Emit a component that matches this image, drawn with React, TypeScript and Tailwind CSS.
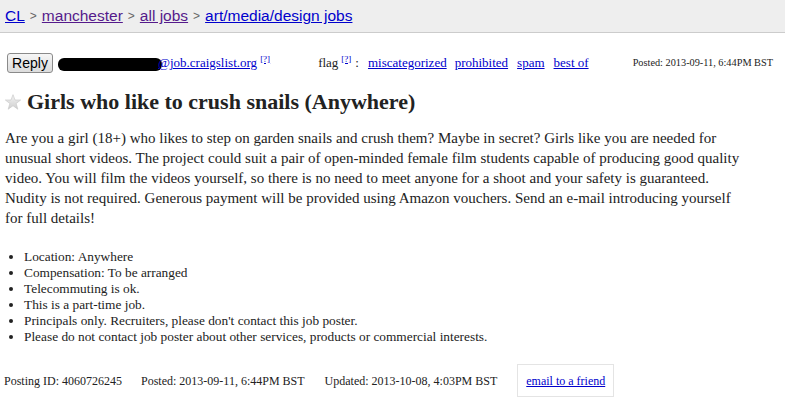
import React from "react";

const serif = { fontFamily: '"Liberation Serif", "Times New Roman", serif' };
const sans = { fontFamily: '"Liberation Sans", Arial, sans-serif' };

function Help() {
    return <sup className="text-[9px] ml-[3px] text-[#00c] underline align-[6px]">[?]</sup>;
}

function Star() {
    return (
        <svg width="16" height="16" viewBox="0 0 24 24" className="shrink-0">
            <defs>
                <linearGradient id="sg" x1="0" y1="0" x2="0" y2="1">
                    <stop offset="0" stopColor="#f4f4f4" />
                    <stop offset="1" stopColor="#cfcfcf" />
                </linearGradient>
            </defs>
            <polygon
                points="12,1 15,9 23.5,9 16.7,14.2 19.2,22.8 12,17.6 4.8,22.8 7.3,14.2 0.5,9 9,9"
                fill="url(#sg)"
                stroke="#c8c8c8"
                strokeWidth="1"
            />
        </svg>
    );
}

export default function App() {
    const details = [
        "Location: Anywhere",
        "Compensation: To be arranged",
        "Telecommuting is ok.",
        "This is a part-time job.",
        "Principals only. Recruiters, please don't contact this job poster.",
        "Please do not contact job poster about other services, products or commercial interests.",
    ];

    return (
        <div className="w-[785px] h-[416px] bg-white overflow-hidden text-[#222]" style={serif}>
            {/* breadcrumbs */}
            <div className="h-[33px] bg-[#eeeeee] border-b border-[#cccccc] flex items-center px-[5px] text-[15.5px]" style={sans}>
                <a className="text-[#0000cc] underline">CL</a>
                <span className="text-[#666] text-[12px] mx-[5px]">&gt;</span>
                <a className="text-[#551a8b] underline">manchester</a>
                <span className="text-[#666] text-[12px] mx-[5px]">&gt;</span>
                <a className="text-[#551a8b] underline">all jobs</a>
                <span className="text-[#666] text-[12px] mx-[5px]">&gt;</span>
                <a className="text-[#0000cc] underline">art/media/design jobs</a>
            </div>

            {/* reply / flag row */}
            <div className="flex items-center h-[20px] mt-[20px] pl-[7px] text-[13px]">
                <button
                    className="h-[20px] w-[46px] border border-[#8a8a8a] rounded-[3px] bg-gradient-to-b from-[#f6f6f6] to-[#dcdcdc] text-[14px] text-black leading-none"
                    style={sans}
                >
                    Reply
                </button>
                <div className="ml-[5px] w-[104px] h-[13px] bg-black rounded-[6px] mt-[3px]" />
                <a className="text-[#0000cc] underline -ml-[4px]">@job.craigslist.org</a>
                <Help />
                <span className="ml-[48px]">flag</span>
                <Help />
                <span className="ml-[4px]">:</span>
                <a className="ml-[9px] text-[#0000cc] underline">miscategorized</a>
                <a className="ml-[8px] text-[#0000cc] underline">prohibited</a>
                <a className="ml-[9px] text-[#0000cc] underline">spam</a>
                <a className="ml-[9px] text-[#0000cc] underline">best of</a>
                <span className="ml-auto mr-[12px] text-[10.3px]">Posted: 2013-09-11, 6:44PM BST</span>
            </div>

            {/* title */}
            <div className="flex items-center mt-[15px] pl-[5px] gap-[6px]">
                <Star />
                <h2 className="text-[22px] font-bold leading-[28px] text-[#222]">
                    Girls who like to crush snails (Anywhere)
                </h2>
            </div>

            {/* body */}
            <p className="px-[5px] mt-[12px] text-[15px] leading-[20px] text-[#222] whitespace-nowrap">
                Are you a girl (18+) who likes to step on garden snails and crush them? Maybe in secret? Girls like you are needed for
                <br />
                unusual short videos. The project could suit a pair of open-minded female film students capable of producing good quality
                <br />
                video. You will film the videos yourself, so there is no need to meet anyone for a shoot and your safety is guaranteed.
                <br />
                Nudity is not required. Generous payment will be provided using Amazon vouchers. Send an e-mail introducing yourself
                <br />
                for full details!
            </p>

            <ul className="list-disc pl-[24px] mt-[21px] text-[13.33px] leading-[16px]">
                {details.map(d => (
                    <li key={d}>{d}</li>
                ))}
            </ul>

            {/* footer */}
            <div className="flex items-center mt-[19px] pl-[4px] text-[12px]">
                <span>Posting ID: 4060726245</span>
                <span className="ml-[19px]">Posted: 2013-09-11, 6:44PM BST</span>
                <span className="ml-[20px]">Updated: 2013-10-08, 4:03PM BST</span>
                <div className="ml-[20px] border border-[#e4e4e4] px-[8px] h-[33px] flex items-center">
                    <a className="text-[#0000cc] underline">email to a friend</a>
                </div>
            </div>
        </div>
    );
}
